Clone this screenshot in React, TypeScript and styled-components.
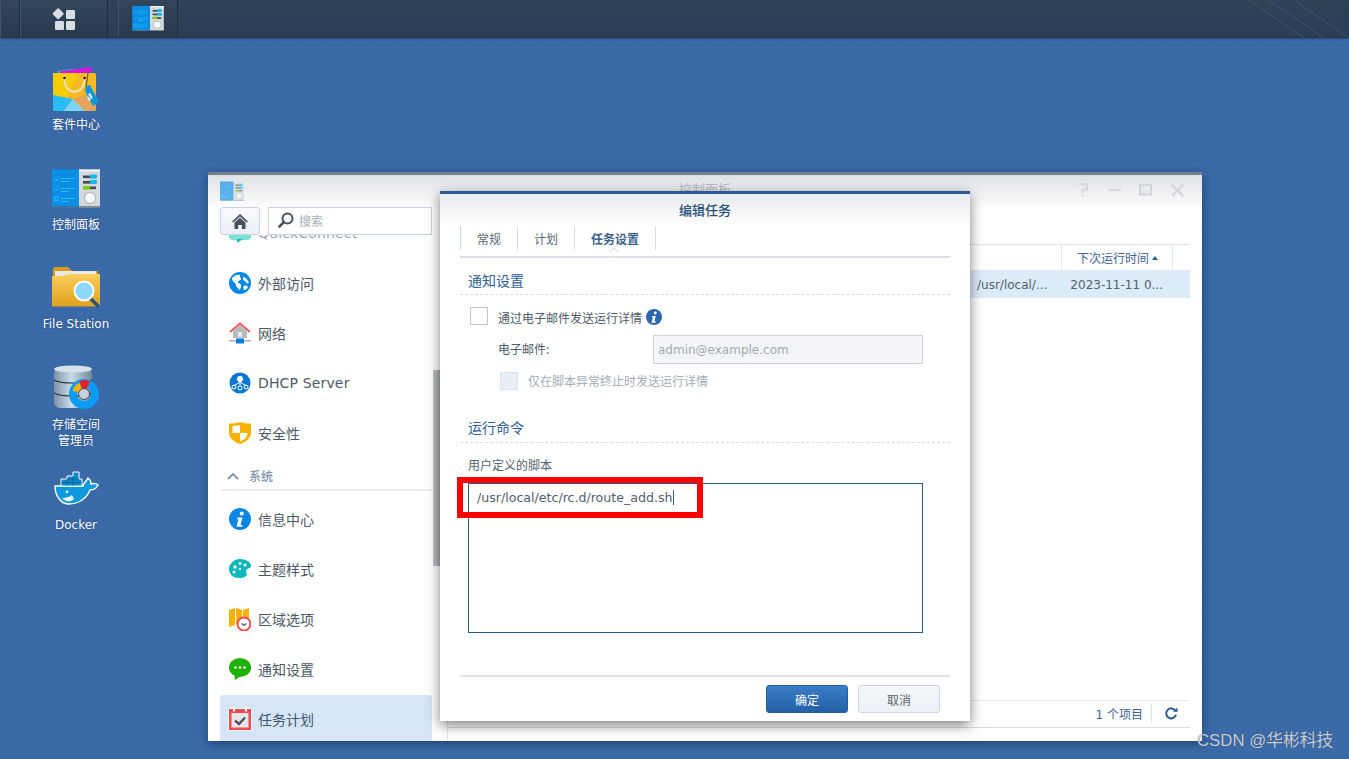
import React from "react";
import styled, { createGlobalStyle } from "styled-components";

const CJK = `"Noto Sans CJK SC", "Noto Sans", sans-serif`;
const LATIN = `"DejaVu Sans", "Noto Sans CJK SC", sans-serif`;

const Global = createGlobalStyle`
  html, body { margin: 0; padding: 0; background: #3a69a8; }
  * { box-sizing: border-box; }
`;

const Screen = styled.div`
  position: relative;
  width: 1349px;
  height: 759px;
  overflow: hidden;
  display: flex;
  flex-direction: column;
  font-family: ${CJK};
  background-color: #3b6aa9;
  background-image: radial-gradient(rgba(30, 70, 130, 0.1) 1px, transparent 1px);
  background-size: 3px 3px;
`;

const Taskbar = styled.header`
  position: relative;
  height: 38px;
  flex: none;
  display: flex;
  background: linear-gradient(#2f4258, #2c3e55);
  border-bottom: 1px solid #233349;
  box-shadow: 0 1px 2px rgba(20, 40, 70, 0.5);
`;

const BarSlot = styled.div<{ $w: number; $gap?: number }>`
  width: ${(p) => p.$w}px;
  margin-right: ${(p) => p.$gap ?? 0}px;
  height: 37px;
  display: flex;
  align-items: center;
  justify-content: center;
  background: linear-gradient(#33465b, #28394d);
  border-right: 1px solid #1e2c3d;
  border-left: 1px solid #445468;
`;

const CornerLines = styled.svg`
  position: absolute;
  right: 0;
  top: 0;
`;

const Workspace = styled.main`
  position: relative;
  flex: 1;
  padding: 24px 0 0 36px;
`;

const Shortcut = styled.div`
  width: 80px;
  height: 100px;
  display: flex;
  flex-direction: column;
  align-items: center;
`;

const ShortcutArt = styled.div`
  height: 52px;
  flex: none;
  display: flex;
  align-items: center;
  justify-content: center;
`;

const ShortcutLabel = styled.div<{ $lift?: boolean }>`
  margin-top: ${(p) => (p.$lift ? 2 : 3)}px;
  width: 80px;
  text-align: center;
  color: #fff;
  font-family: ${LATIN};
  font-size: 12px;
  line-height: 16px;
  text-shadow: 0 0 2px rgba(20, 40, 80, 0.6);
`;

const Win = styled.section`
  position: absolute;
  left: 208px;
  top: 134px;
  width: 994px;
  height: 569px;
  background: #fff;
  border-top: 3px solid #75808d;
  display: flex;
  flex-direction: column;
  box-shadow: 0 3px 10px rgba(15, 35, 70, 0.55);
`;

const WinTitleBar = styled.div`
  position: relative;
  height: 32px;
  flex: none;
  padding-left: 12px;
  display: flex;
  align-items: center;
  background: linear-gradient(#dfe2e6, #fcfcfd);
`;

const WinTitle = styled.div`
  position: absolute;
  left: 471px;
  top: 5px;
  font-size: 13px;
  line-height: 18px;
  color: #b4bac1;
`;

const WinControls = styled.div`
  margin-left: auto;
  width: 107px;
  margin-right: 18px;
  display: flex;
  justify-content: space-between;
  align-items: center;
  height: 20px;
  position: relative;
  top: -1px;
`;

const WinBody = styled.div`
  flex: 1;
  min-height: 0;
  display: flex;
`;

const Sidebar = styled.aside`
  position: relative;
  width: 240px;
  flex: none;
  display: flex;
  flex-direction: column;
  border-right: 1px solid #e2e7ee;
`;

const SideTools = styled.div`
  position: relative;
  z-index: 1;
  height: 28px;
  flex: none;
  padding-left: 12px;
  display: flex;
  gap: 8px;
`;

const HomeBtn = styled.div`
  width: 40px;
  height: 28px;
  border: 1px solid #c6d3e2;
  border-radius: 3px;
  background: linear-gradient(#f9fafc, #eaf0f6);
  display: flex;
  align-items: center;
  justify-content: center;
`;

const SearchBox = styled.div`
  width: 164px;
  height: 28px;
  border: 1px solid #c6d3e2;
  background: #fff;
  display: flex;
  align-items: center;
  padding: 0 0 2px 9px;
  gap: 5px;
  font-size: 12px;
  color: #a6adb6;
`;

const SideList = styled.div`
  flex: 1;
  min-height: 0;
  overflow: hidden;
  padding-left: 12px;
`;

const SideInner = styled.div`
  margin-top: -27px;
  width: 212px;
`;

const SideItem = styled.div<{ $active?: boolean }>`
  height: 50px;
  margin-top: ${(p) => (p.$active ? 1 : 0)}px;
  padding: 0 0 ${(p) => (p.$active ? 2 : 0)}px 9px;
  display: flex;
  align-items: center;
  gap: 7px;
  border-radius: 3px;
  color: ${(p) => (p.$active ? "#3f5672" : "#4d5866")};
  background: ${(p) => (p.$active ? "#d6e5f7" : "transparent")};
`;

const SideText = styled.span<{ $latin?: boolean; $faded?: boolean }>`
  font-family: ${(p) => (p.$latin ? LATIN : CJK)};
  font-size: 14px;
  letter-spacing: ${(p) => (p.$latin ? "0.15px" : "0")};
  color: ${(p) => (p.$faded ? "#9aa3ad" : "inherit")};
`;

const SideSection = styled.div`
  height: 33px;
  margin-bottom: 3px;
  padding: 4px 0 0 7px;
  display: flex;
  align-items: center;
  gap: 10px;
  border-bottom: 2px solid #e9eff6;
  color: #7d94ad;
  font-size: 12px;
  font-weight: 500;
`;

const ScrollThumb = styled.div`
  position: absolute;
  left: 225px;
  top: 163px;
  width: 7px;
  height: 196px;
  background: linear-gradient(90deg, #c2c4c7, #a9acb0);
`;

const Main = styled.div`
  flex: 1;
  min-width: 0;
  padding: 37px 12px 13px 0;
  display: flex;
  flex-direction: column;
`;

const GridHead = styled.div`
  height: 27px;
  flex: none;
  border-top: 1px solid #dbe3ec;
  border-bottom: 1px solid #e3e9f0;
  display: flex;
  justify-content: flex-end;
  padding-right: 17px;
`;

const HeadCell = styled.div`
  width: 112px;
  border-left: 1px solid #e3e9f0;
  border-right: 1px solid #e3e9f0;
  padding-left: 15px;
  display: flex;
  align-items: center;
  gap: 3px;
  font-size: 12px;
  color: #3c6491;
`;

const SortMark = styled.i`
  width: 0;
  height: 0;
  border-left: 3.5px solid transparent;
  border-right: 3.5px solid transparent;
  border-bottom: 4px solid #2e5a8e;
`;

const GridRow = styled.div`
  height: 27px;
  flex: none;
  background: #dcebfa;
  display: flex;
  align-items: center;
  justify-content: flex-end;
  padding-right: 27px;
  gap: 23px;
  font-family: ${LATIN};
  font-size: 12px;
  color: #56606c;
`;

const GridSpacer = styled.div`
  flex: 1;
`;

const GridFoot = styled.div`
  height: 28px;
  flex: none;
  border-top: 1px solid #e6ebf1;
  border-bottom: 1px solid #d3deea;
  display: flex;
  align-items: center;
  justify-content: flex-end;
  padding: 0 12px 2px 0;
  font-family: ${LATIN};
  font-size: 12px;
  color: #3c6491;
`;

const FootDivider = styled.i`
  width: 1px;
  height: 20px;
  background: #dde4ec;
  margin: 0 13px 0 8px;
`;

const Dialog = styled.section`
  position: absolute;
  left: 232px;
  top: 16px;
  width: 530px;
  height: 530px;
  background: #fff;
  border-top: 3px solid #2c5a90;
  box-shadow: 0 4px 12px rgba(0, 0, 0, 0.5);
  display: flex;
  flex-direction: column;
  z-index: 2;
`;

const DialogHead = styled.div`
  height: 32px;
  flex: none;
  padding-bottom: 2px;
  display: flex;
  align-items: center;
  justify-content: center;
  font-size: 13px;
  font-weight: 500;
  color: #2b4f7c;
  background: linear-gradient(#e8ebef, #ffffff);
`;

const DialogBody = styled.div`
  flex: 1;
  min-height: 0;
  padding: 0 20px;
  display: flex;
  flex-direction: column;
`;

const Tabs = styled.div`
  height: 32px;
  flex: none;
  position: relative;
  display: flex;
  align-items: flex-start;
  border-bottom: 2px solid #dcdfe3;
`;

const Tab = styled.div<{ $active?: boolean; $last?: boolean }>`
  height: 24px;
  padding: 0 16px;
  border-left: 1px solid #d5dee8;
  border-right: ${(p) => (p.$last ? "1px solid #d5dee8" : "none")};
  display: flex;
  align-items: center;
  font-size: 12px;
  font-weight: ${(p) => (p.$active ? 700 : 400)};
  color: ${(p) => (p.$active ? "#3a5f8c" : "#5d6772")};
`;

const TabNotch = styled.i`
  position: absolute;
  left: 149px;
  bottom: -2px;
  width: 10px;
  height: 10px;
  background: #fff;
  border-left: 2px solid #dcdfe3;
  border-top: 2px solid #dcdfe3;
  transform: translateY(-1px) rotate(45deg) scale(0.7);
  border-radius: 1px 0 0 0;
`;

const SectionTitle = styled.h3<{ $top: number; $pad: number }>`
  margin: ${(p) => p.$top}px 0 0;
  padding: 0 0 ${(p) => p.$pad}px 8px;
  font-size: 14px;
  font-weight: 400;
  line-height: 20px;
  color: #2f5f95;
  border-bottom: 1px dashed #d3deea;
`;

const CheckRow = styled.div<{ $top: number; $indent: number }>`
  margin-top: ${(p) => p.$top}px;
  padding-left: ${(p) => p.$indent}px;
  height: 18px;
  display: flex;
  align-items: center;
  gap: 10px;
`;

const CheckMark = styled.div<{ $disabled?: boolean }>`
  width: 18px;
  height: 18px;
  flex: none;
  border: 1px solid ${(p) => (p.$disabled ? "#dbe3ec" : "#bfc9d6")};
  background: ${(p) => (p.$disabled ? "#e9eef4" : "#fff")};
`;

const FieldText = styled.span<{ $muted?: boolean }>`
  font-size: 12px;
  position: relative;
  top: ${(p) => (p.$muted ? -1 : 1)}px;
  color: ${(p) => (p.$muted ? "#a4acb6" : "#4f5a67")};
`;

const InfoDot = styled.span`
  display: flex;
  margin-left: -6px;
  position: relative;
  top: 1px;
`;

const EmailRow = styled.div`
  margin-top: 10px;
  padding-left: 38px;
  display: flex;
  align-items: center;
`;

const EmailLabel = styled.span`
  width: 155px;
  padding-bottom: 3px;
  font-size: 12px;
  color: #4f5a67;
`;

const EmailInput = styled.div`
  width: 270px;
  height: 29px;
  border: 1px solid #ccd4dd;
  background: #f3f5f8;
  padding-left: 4px;
  display: flex;
  align-items: center;
  font-family: ${LATIN};
  font-size: 12px;
  color: #a3a9b1;
`;

const FieldCaption = styled.div`
  margin: 14px 0 10px 8px;
  font-size: 12px;
  line-height: 16px;
  color: #56616e;
`;

const ScriptBox = styled.div`
  margin-left: 8px;
  width: 455px;
  height: 150px;
  flex: none;
  border: 1px solid #2c5a90;
  padding: 5px 8px;
  font-family: ${LATIN};
  font-size: 12.6px;
  line-height: 17px;
  color: #55606c;
`;

const Caret = styled.span`
  display: inline-block;
  width: 1px;
  height: 15px;
  background: #2c5a90;
  vertical-align: -3px;
`;

const DialogFoot = styled.div`
  margin-top: auto;
  height: 46px;
  flex: none;
  border-top: 2px solid #e4e4e4;
  padding: 8px 10px 0 0;
  display: flex;
  justify-content: flex-end;
  gap: 10px;
`;

const Btn = styled.div<{ $primary?: boolean }>`
  width: 82px;
  height: 28px;
  border-radius: 3px;
  display: flex;
  align-items: center;
  justify-content: center;
  font-size: 12px;
  color: ${(p) => (p.$primary ? "#fff" : "#5d6670")};
  border: 1px solid ${(p) => (p.$primary ? "#2a5f9e" : "#cbd6e2")};
  background: ${(p) =>
    p.$primary ? "linear-gradient(#3b7cc8, #2460a8)" : "linear-gradient(#f6f8fa, #eaf0f6)"};
`;

const RedMark = styled.div`
  position: absolute;
  left: 457px;
  top: 477px;
  width: 246px;
  height: 41px;
  border: 6px solid #ff0000;
  z-index: 5;
`;

const Watermark = styled.div`
  position: absolute;
  left: 1197px;
  top: 728px;
  font-family: "Liberation Sans", ${CJK};
  font-size: 16.8px;
  line-height: 26px;
  color: #c4ccd6;
  text-shadow: 0 0 1px rgba(60, 60, 60, 0.6);
  z-index: 6;
`;

const StartGlyph = () => (
  <svg width="24" height="24" viewBox="0 0 24 24">
    <rect x="2" y="2.6" width="8.4" height="8.4" rx="1" transform="rotate(45 6.2 6.8)" fill="#d8dee4" />
    <rect x="14" y="3" width="9" height="9" rx="1.2" fill="#d8dee4" />
    <rect x="3" y="14" width="9" height="9" rx="1.2" fill="#d8dee4" />
    <rect x="14" y="14" width="9" height="9" rx="1.2" fill="#d8dee4" />
  </svg>
);

const PanelArt = ({ w, h, faded }: { w: number; h: number; faded?: boolean }) => (
  <svg width={w} height={h} viewBox="0 0 48 38" opacity={faded ? 0.65 : 1}>
    <rect x="27" y="0" width="21" height="38" fill="#d5d9dc" />
    <rect x="27" y="0" width="21" height="2" fill="#f2f3f4" />
    <rect x="0" y="0" width="27" height="38" fill="#0a8ee6" />
    <rect x="0" y="36.8" width="48" height="1.2" fill="#5c6b78" />
    <g stroke="#22c0f5" strokeWidth="1" fill="none">
      <path d="M2 9l2 2 3-4M9 9h14M9 12h8M2 19l2 2 3-4M9 19h14M9 22h8M9 29h14M9 32h8" />
      <rect x="2.5" y="27.5" width="3.5" height="3.5" />
    </g>
    <g>
      <rect x="31" y="6" width="13" height="2.6" fill="#3f4a52" />
      <rect x="38" y="5" width="7" height="4" rx="1" fill="#12b7f2" />
      <rect x="31" y="11.5" width="13" height="2.6" fill="#3f4a52" />
      <rect x="38" y="10.5" width="7" height="4" rx="1" fill="#12b7f2" />
      <rect x="31" y="17" width="13" height="2.6" fill="#3f4a52" />
      <rect x="31" y="16.5" width="7" height="3.4" rx="1" fill="#7ccf13" />
    </g>
    <circle cx="38" cy="28.5" r="6.2" fill="#b6bcc0" />
    <circle cx="38" cy="28.5" r="5" fill="#f1f7fb" />
  </svg>
);

const BagArt = () => (
  <svg width="46" height="46" viewBox="0 0 46 46">
    <path d="M4 6l17-2 3 4H6z" fill="#2ec5e8" />
    <path d="M6 6.5L38 2l1 5-30 3z" fill="#dc12e0" />
    <rect x="0" y="8" width="43" height="38" rx="1.5" fill="#f7b924" />
    <path d="M0 8h26L13 33 0 30z" fill="#f6cd05" />
    <path d="M0 30l20 4-9 12H1.5A1.5 1.5 0 0 1 0 44.5z" fill="#2bbdf5" />
    <path d="M20 34l12 12H11z" fill="#7fd3f5" />
    <path d="M20 34L43 26v18.5a1.5 1.5 0 0 1-1.5 1.5H32z" fill="#e2a65c" />
    <path d="M11.5 14c0 17 20 17 20 0" fill="none" stroke="#f1dfc0" strokeWidth="2" />
    <circle cx="11.5" cy="13" r="1.3" fill="#222" />
    <circle cx="31.5" cy="13" r="1.3" fill="#222" />
    <path d="M35 8l-2 14" stroke="#7a5d16" strokeWidth="1.2" />
    <path d="M33 21l4 -1 9 17-6 4-8-15z" fill="#0d97de" />
    <path d="M37 28l3 5-2 1-3-5zM35 31l3 4-2 1-2-4z" fill="#d9f1fb" />
  </svg>
);

const FolderArt = () => (
  <svg width="48" height="42" viewBox="0 0 48 42">
    <defs>
      <linearGradient id="fg" x1="0" y1="0" x2="0" y2="1">
        <stop offset="0" stopColor="#fbcf5a" />
        <stop offset="1" stopColor="#e19f1f" />
      </linearGradient>
    </defs>
    <path d="M1 2a2 2 0 0 1 2-2h13l4 4h26v34H1z" fill="#d59a1f" />
    <rect x="3" y="4" width="41" height="5" fill="#e9e9e9" />
    <path d="M0 9c10 0 14-1 18-2l30 0v31a1.5 1.5 0 0 1-1.5 1.5H1.5A1.5 1.5 0 0 1 0 38z" fill="url(#fg)" />
    <path d="M38 31l8 8" stroke="#1f5a80" strokeWidth="3.4" strokeLinecap="round" />
    <circle cx="32" cy="24" r="9.5" fill="#8fd8fb" stroke="#fff" strokeWidth="2" />
  </svg>
);

const StorageArt = () => (
  <svg width="46" height="46" viewBox="0 0 46 46">
    <defs>
      <linearGradient id="cyl" x1="0" y1="0" x2="1" y2="0">
        <stop offset="0" stopColor="#7d93a6" />
        <stop offset=".45" stopColor="#c8dbe8" />
        <stop offset="1" stopColor="#72899c" />
      </linearGradient>
    </defs>
    <rect x="1" y="3" width="38" height="40" rx="6" fill="url(#cyl)" />
    <ellipse cx="20" cy="4" rx="19" ry="3.6" fill="#d8e2e9" />
    <path d="M1 15c6 4 32 4 38 0M1 28c6 4 32 4 38 0" stroke="#25333f" strokeWidth="1.2" fill="none" />
    <circle cx="31" cy="29" r="11" fill="none" stroke="#0a9bf5" strokeWidth="8" />
    <path d="M19.500 26A12 12 0 0 1 26.500 17.800L29 24.800A5 5 0 0 0 26.800 27z" fill="#f7b500" />
    <path d="M26.500 16A14 14 0 0 1 37 16.500L33.600 24A6 6 0 0 0 29 24z" fill="#ec1c24" />
    <circle cx="31" cy="29" r="5.500" fill="#c8d2da" stroke="#25333f" strokeWidth=".8" />
  </svg>
);

const DockerArt = () => (
  <svg width="46" height="34" viewBox="0 0 46 34">
    <path
      d="M2 15h28c1-4 4-5 5-8 3 2 3 5 3 6 3-1 6 0 7 1-2 4-5 5-8 5-3 8-11 14-21 14C8 33 2 25 2 15z"
      fill="#0c9ade"
      stroke="#fff"
      strokeWidth="1.4"
    />
    <path d="M8 8h6V5h6V1h6v7h3v7H8z" fill="#0c86c6" stroke="#fff" strokeWidth="1" />
    <path d="M14 8v7M20 5v10M26 8H14M8 11.5h21" stroke="#0a5f93" strokeWidth=".7" />
    <path d="M9 27c5 0 7-1 10-3l2 4c-3 3-7 4-12-1z" fill="#e8f6fc" />
    <circle cx="14" cy="21" r="1.4" fill="#e8f6fc" />
  </svg>
);

const SmallIcon = styled.svg`
  flex: none;
`;

const WideIcon = styled.svg`
  flex: none;
  margin: 0 -1px;
`;

const TealBubble = () => (
  <SmallIcon width="22" height="22" viewBox="0 0 22 22">
    <rect x="0" y="0" width="22" height="18" rx="5" fill="#1fbcb3" />
    <rect x="0" y="10" width="22" height="8" rx="4" fill="#7fe0d4" />
    <path d="M8 17h6l-6 4z" fill="#1fbcb3" />
  </SmallIcon>
);

const GlobeIcon = () => (
  <SmallIcon width="22" height="22" viewBox="0 0 22 22">
    <circle cx="11" cy="11" r="11" fill="#0a86e4" />
    <path d="M3 6c2-2 5-4 8-3-1 2 1 2 1 4s-3 1-3 3 3 1 3 3 0 4-2 5c-1-3-3-3-3-5S3 10 3 6zM15 5c2 1 4 3 5 6-2 1-3 0-3-1s-3-1-3-3 0-1 1-2zM15 14c2-1 3 0 4 1-1 2-2 3-4 3-1-2-1-3 0-4z" fill="#fff" />
  </SmallIcon>
);

const HouseIcon = () => (
  <SmallIcon width="22" height="22" viewBox="0 0 22 22">
    <path d="M4 9l7-6 7 6v7H4z" fill="#b2bac2" />
    <rect x="9" y="10" width="4" height="5" fill="#e6eaee" />
    <path d="M1 10l10-8.5L21 10" fill="none" stroke="#f2555a" strokeWidth="1.8" />
    <rect x="0" y="18" width="22" height="1.6" fill="#aeb6be" />
    <rect x="7" y="16.5" width="8" height="5" rx=".5" fill="#0a7fd9" />
  </SmallIcon>
);

const DhcpIcon = () => (
  <SmallIcon width="22" height="22" viewBox="0 0 22 22">
    <circle cx="11" cy="11" r="10.5" fill="#0a78d2" />
    <circle cx="11" cy="7" r="3" fill="#fff" />
    <path d="M11 9v5M11 10l-6 4M11 10l6 4" stroke="#fff" strokeWidth="1" />
    <g fill="none" stroke="#fff" strokeWidth="1">
      <circle cx="5" cy="15" r="2" />
      <circle cx="11" cy="16" r="2" />
      <circle cx="17" cy="15" r="2" />
    </g>
  </SmallIcon>
);

const ShieldIcon = () => (
  <SmallIcon width="22" height="22" viewBox="0 0 22 22">
    <path d="M0 1.5c4 0 7-.5 11-1.5 4 1 7 1.5 11 1.5V11c0 5-5 9-11 11C5 20 0 16 0 11z" fill="#fbb103" />
    <path d="M11 3C8.500 3.500 6 4 3.500 4V11H11zM11 11V19.500C15 18 18.500 15 18.500 11z" fill="#fff" />
  </SmallIcon>
);

const InfoIcon = ({ size, fill }: { size: number; fill: string }) => (
  <SmallIcon width={size} height={size} viewBox="0 0 22 22">
    <circle cx="11" cy="11" r="11" fill={fill} />
    <circle cx="12.800" cy="5.500" r="2" fill="#fff" />
    <path d="M8.500 9.500h5l-2 7.500h2l-.5 1.800h-5.500l2-7.500h-1.500z" fill="#fff" />
  </SmallIcon>
);

const PaletteIcon = () => (
  <SmallIcon width="22" height="22" viewBox="0 0 22 22">
    <path d="M11 1c6 0 11 3 11 7 0 3-5 2-5 5 0 2 2 3 0 5-2 2-5 2-7 2C4 20 0 16 0 11S5 1 11 1z" fill="#08b8bb" />
    <g fill="#fff">
      <circle cx="6" cy="9" r="1.700" />
      <circle cx="11" cy="5.500" r="1.500" />
      <circle cx="16" cy="7" r="1.500" />
      <circle cx="5" cy="14" r="1.500" />
      <circle cx="11" cy="11" r="1.200" />
    </g>
  </SmallIcon>
);

const MapClockIcon = () => (
  <SmallIcon width="22" height="24" viewBox="0 0 22 24">
    <path d="M0 3l6-2v17l-6 2zM7 1l6 2v9l-6 6zM14 3l6-2v11l-6-1z" fill="#fbb103" />
    <circle cx="15" cy="17" r="6.500" fill="#fff" stroke="#f04f54" strokeWidth="2" />
    <path d="M12.500 16.500l2.500 2 2.500-2" fill="none" stroke="#555f69" strokeWidth="1.200" />
  </SmallIcon>
);

const ChatIcon = () => (
  <SmallIcon width="22" height="22" viewBox="0 0 22 22">
    <ellipse cx="11" cy="9.500" rx="11" ry="9.500" fill="#1fb100" />
    <path d="M5 15l1 7 6-4z" fill="#1fb100" />
    <circle cx="6.500" cy="9.500" r="1.300" fill="#fff" />
    <circle cx="11" cy="9.500" r="1.300" fill="#fff" />
    <circle cx="15.500" cy="9.500" r="1.300" fill="#fff" />
  </SmallIcon>
);

const CalendarIcon = () => (
  <WideIcon width="24" height="24" viewBox="0 0 24 24">
    <rect x="0.500" y="1.500" width="23" height="22" rx="1" fill="#f2484e" stroke="#fff" />
    <rect x="3.500" y="6" width="17" height="14.500" fill="#e6e8eb" />
    <rect x="5" y="0" width="2" height="4.500" fill="#fff" />
    <rect x="17" y="0" width="2" height="4.500" fill="#fff" />
    <path d="M7 13.500l4 3.500 6-6.500" fill="none" stroke="#4d5560" strokeWidth="2.400" />
  </WideIcon>
);

const HomeGlyph = () => (
  <svg width="16" height="15" viewBox="0 0 16 15">
    <path d="M0 7.500L8 0l8 7.500-1.300 1L8 2.500 1.300 8.500z" fill="#47525e" />
    <path d="M2.500 8.500L8 3.800l5.500 4.700V15H9.800v-4H6.200v4H2.500z" fill="#47525e" />
  </svg>
);

const SearchGlyph = () => (
  <svg width="16" height="16" viewBox="0 0 16 16">
    <circle cx="9.500" cy="6.500" r="5" fill="none" stroke="#47525e" strokeWidth="2" />
    <path d="M5.800 10.200L1.500 14.500" stroke="#47525e" strokeWidth="2.600" strokeLinecap="round" />
  </svg>
);

const ChevronUp = () => (
  <svg width="12" height="8" viewBox="0 0 12 8">
    <path d="M1 7l5-5 5 5" fill="none" stroke="#7d94ad" strokeWidth="1.800" />
  </svg>
);

const HelpGlyph = () => (
  <svg width="12" height="14" viewBox="0 0 12 14">
    <path d="M1.500 1.200h8.500v5.500H5.500v3" fill="none" stroke="#d5d8dc" strokeWidth="2" />
    <rect x="4.500" y="11.500" width="2" height="2" fill="#d5d8dc" />
  </svg>
);
const MinGlyph = () => (
  <svg width="13" height="14" viewBox="0 0 13 14">
    <rect x="0" y="6" width="13" height="2" fill="#d5d8dc" />
  </svg>
);
const MaxGlyph = () => (
  <svg width="13" height="12" viewBox="0 0 13 12">
    <rect x="1" y="1" width="11" height="9.500" fill="#e8eaec" stroke="#d2d5d9" strokeWidth="2" />
  </svg>
);
const CloseGlyph = () => (
  <svg width="13" height="13" viewBox="0 0 13 13">
    <path d="M1 1l11 11M12 1L1 12" stroke="#d2d5d9" strokeWidth="1.800" />
  </svg>
);

const RefreshGlyph = () => (
  <svg width="13" height="13" viewBox="0 0 13 13">
    <path d="M10.500 3.800A5 5 0 1 0 11 7.800" fill="none" stroke="#2c5a90" strokeWidth="2" />
    <path d="M8 4.500L12.500 5V0.500z" fill="#2c5a90" />
  </svg>
);

const shortcuts = [
  { lines: ["套件中心"], art: <BagArt /> },
  { lines: ["控制面板"], art: <PanelArt w={48} h={39} /> },
  { lines: ["File Station"], art: <FolderArt />, lift: true },
  { lines: ["存储空间", "管理员"], art: <StorageArt /> },
  { lines: ["Docker"], art: <DockerArt /> },
];

const topItems = [
  { label: "外部访问", icon: <GlobeIcon /> },
  { label: "网络", icon: <HouseIcon /> },
  { label: "DHCP Server", icon: <DhcpIcon />, latin: true },
  { label: "安全性", icon: <ShieldIcon /> },
];

const systemItems = [
  { label: "信息中心", icon: <InfoIcon size={22} fill="#0a86e4" /> },
  { label: "主题样式", icon: <PaletteIcon /> },
  { label: "区域选项", icon: <MapClockIcon /> },
  { label: "通知设置", icon: <ChatIcon /> },
];

export default function App() {
  return (
    <Screen>
      <Global />
      <Taskbar>
        <BarSlot $w={20} />
        <BarSlot $w={88} $gap={10}>
          <StartGlyph />
        </BarSlot>
        <BarSlot $w={60}>
          <PanelArt w={32} h={25} />
        </BarSlot>
        <CornerLines width="110" height="38" viewBox="0 0 110 38">
          <path d="M10 0l55 38M30 0l55 38M55 0l55 38" stroke="#3d526c" strokeWidth="1" fill="none" />
        </CornerLines>
      </Taskbar>
      <Workspace>
        {shortcuts.map((s) => (
          <Shortcut key={s.lines[0]}>
            <ShortcutArt>{s.art}</ShortcutArt>
            <ShortcutLabel $lift={s.lift}>
              {s.lines.map((l) => (
                <div key={l}>{l}</div>
              ))}
            </ShortcutLabel>
          </Shortcut>
        ))}
        <Win>
          <WinTitleBar>
            <PanelArt w={24} h={20} faded />
            <WinTitle>控制面板</WinTitle>
            <WinControls>
              <HelpGlyph />
              <MinGlyph />
              <MaxGlyph />
              <CloseGlyph />
            </WinControls>
          </WinTitleBar>
          <WinBody>
            <Sidebar>
              <SideTools>
                <HomeBtn>
                  <HomeGlyph />
                </HomeBtn>
                <SearchBox>
                  <SearchGlyph />
                  搜索
                </SearchBox>
              </SideTools>
              <SideList>
                <SideInner>
                  <SideItem>
                    <TealBubble />
                    <SideText $latin $faded>QuickConnect</SideText>
                  </SideItem>
                  {topItems.map((i) => (
                    <SideItem key={i.label}>
                      {i.icon}
                      <SideText $latin={i.latin}>{i.label}</SideText>
                    </SideItem>
                  ))}
                  <SideSection>
                    <ChevronUp />
                    系统
                  </SideSection>
                  {systemItems.map((i) => (
                    <SideItem key={i.label}>
                      {i.icon}
                      <SideText>{i.label}</SideText>
                    </SideItem>
                  ))}
                  <SideItem $active>
                    <CalendarIcon />
                    <SideText>任务计划</SideText>
                  </SideItem>
                </SideInner>
              </SideList>
              <ScrollThumb />
            </Sidebar>
            <Main>
              <GridHead>
                <HeadCell>
                  下次运行时间
                  <SortMark />
                </HeadCell>
              </GridHead>
              <GridRow>
                <span>/usr/local/...</span>
                <span>2023-11-11 0...</span>
              </GridRow>
              <GridSpacer />
              <GridFoot>
                1 个项目
                <FootDivider />
                <RefreshGlyph />
              </GridFoot>
            </Main>
          </WinBody>
          <Dialog>
            <DialogHead>编辑任务</DialogHead>
            <DialogBody>
              <Tabs>
                <Tab>常规</Tab>
                <Tab>计划</Tab>
                <Tab $active $last>任务设置</Tab>
                <TabNotch />
              </Tabs>
              <SectionTitle $top={12} $pad={4}>通知设置</SectionTitle>
              <CheckRow $top={12} $indent={10}>
                <CheckMark />
                <FieldText>通过电子邮件发送运行详情</FieldText>
                <InfoDot>
                  <InfoIcon size={16} fill="#2a66ae" />
                </InfoDot>
              </CheckRow>
              <EmailRow>
                <EmailLabel>电子邮件:</EmailLabel>
                <EmailInput>admin@example.com</EmailInput>
              </EmailRow>
              <CheckRow $top={8} $indent={40}>
                <CheckMark $disabled />
                <FieldText $muted>仅在脚本异常终止时发送运行详情</FieldText>
              </CheckRow>
              <SectionTitle $top={27} $pad={5}>运行命令</SectionTitle>
              <FieldCaption>用户定义的脚本</FieldCaption>
              <ScriptBox>
                /usr/local/etc/rc.d/route_add.sh
                <Caret />
              </ScriptBox>
              <DialogFoot>
                <Btn $primary>确定</Btn>
                <Btn>取消</Btn>
              </DialogFoot>
            </DialogBody>
          </Dialog>
        </Win>
      </Workspace>
      <RedMark />
      <Watermark>CSDN @华彬科技</Watermark>
    </Screen>
  );
}
